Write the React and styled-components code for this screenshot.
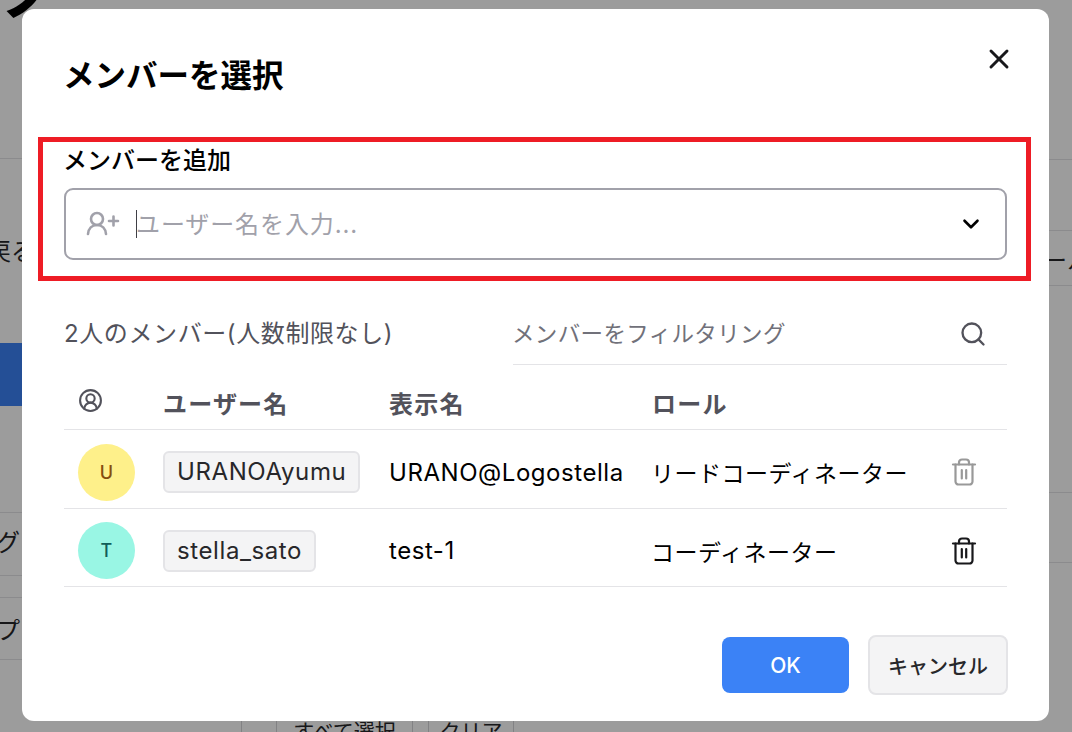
// ===== import base =====
import React from "react"
import styled, { createGlobalStyle } from "styled-components"
import { X, ChevronDown, Search, CircleUserRound } from "lucide-react"

// ===== style =====
const GlobalStyle = createGlobalStyle`
    html, body {
        margin : 0;
        padding : 0;
        height : 100%;
        overflow : hidden;
        background : #fff;
    }
    body {
        font-family : Inter, "Noto Sans CJK JP", sans-serif;
    }
`

// ----- page behind the dialog -----
const Page = styled.div`
    width : 1072px;
    height : 732px;
    overflow : hidden;
    display : flex;
    background : #fff;
    color : #27272a;
    font-size : 24px;
`
const LeftColumn = styled.div`
    width : 241px;
    flex : none;
    display : flex;
    flex-direction : column;
`
const CenterColumn = styled.div`
    flex : 1;
    display : flex;
    flex-direction : column;
    justify-content : flex-end;
`
const RightColumn = styled.div`
    width : 120px;
    flex : none;
    display : flex;
    flex-direction : column;
`
const PageRow = styled.div`
    height : ${(p) => p.$height}px;
    box-sizing : border-box;
    flex : none;
    display : flex;
    align-items : center;
    white-space : nowrap;
    overflow : hidden;
    padding-bottom : ${(p) => p.$lift || 0}px;
    border-bottom : ${(p) => p.$line ? "1px solid #e4e4e7" : "none"};
`
const ClippedLabel = styled.span`
    display : block;
    margin-left : ${(p) => p.$shift}px;
`
const HeadingMark = styled.div`
    height : 159px;
    box-sizing : border-box;
    flex : none;
    overflow : hidden;
    border-bottom : 1px solid #e4e4e7;
    font-size : 60px;
    font-weight : 700;
    line-height : 60px;
    color : #000;
    span {
        display : block;
        margin : -36px 0 0 0;
    }
`
const BlueBar = styled.div`
    height : 63px;
    flex : none;
    background : #3b82f6;
`
const BottomBar = styled.div`
    height : 16px;
    flex : none;
    display : flex;
    gap : 15px;
    border-left : 1px solid #d4d4d8;
    padding-left : 34px;
`
const PageButton = styled.div`
    width : ${(p) => p.$width}px;
    height : 40px;
    flex : none;
    box-sizing : border-box;
    border : 1px solid #d4d4d8;
    display : flex;
    justify-content : center;
    font-size : 21px;
    line-height : 30px;
`

// ----- dialog -----
const Overlay = styled.div`
    position : fixed;
    inset : 0;
    background : rgba(0, 0, 0, 0.39);
`
const Dialog = styled.div`
    position : fixed;
    left : 22px;
    top : 9px;
    width : 1027px;
    height : 712px;
    box-sizing : border-box;
    padding : 0 42px;
    background : #fff;
    border-radius : 12px;
    display : flex;
    flex-direction : column;
`
const CloseBtn = styled.button`
    position : absolute;
    top : 32px;
    right : 32px;
    width : 36px;
    height : 36px;
    padding : 0;
    border : none;
    background : none;
    color : #18181b;
    display : flex;
    align-items : center;
    justify-content : center;
`
const Title = styled.h2`
    margin : 0 0 0 -1px;
    padding-top : 46px;
    height : 128px;
    box-sizing : border-box;
    font-size : 31.5px;
    line-height : 42px;
    font-weight : 700;
    color : #000;
`
const AddSection = styled.section`
    margin : 0 -24px 0 -26px;
    padding : 9px 24px 21px 26px;
    outline : 5px solid #ee1c25;
    outline-offset : -5px;
    display : flex;
    flex-direction : column;
`
const FieldLabel = styled.label`
    font-size : 24px;
    line-height : 30px;
    font-weight : 500;
    color : #000;
    margin : 0 0 12px -1px;
`
const SelectBox = styled.div`
    height : 72px;
    box-sizing : border-box;
    border : 2px solid #a1a1aa;
    border-radius : 9px;
    display : flex;
    align-items : center;
    padding : 0 21px 0 20px;
    color : #000;
`
const Caret = styled.span`
    width : 1px;
    height : 28px;
    flex : none;
    background : #3f3f46;
    margin-left : 16px;
`
const SelectInput = styled.input`
    flex : 1;
    min-width : 0;
    border : none;
    outline : none;
    background : none;
    padding : 0;
    margin-left : -1px;
    font : inherit;
    font-size : 24px;
    letter-spacing : 0.9px;
    &::placeholder {
        color : #a1a1aa;
        opacity : 1;
    }
`
const FilterRow = styled.div`
    height : 84px;
    flex : none;
    display : flex;
    align-items : flex-end;
    justify-content : space-between;
`
const MemberCount = styled.span`
    font-size : 24px;
    line-height : 62px;
    color : #52525b;
    letter-spacing : 0.6px;
    white-space : nowrap;
`
const FilterBox = styled.div`
    width : 494px;
    height : 62px;
    box-sizing : border-box;
    border-bottom : 1px solid #e4e4e7;
    display : flex;
    align-items : center;
    padding-right : 20px;
    color : #52525b;
`
const FilterInput = styled.input`
    flex : 1;
    min-width : 0;
    border : none;
    outline : none;
    background : none;
    padding : 0;
    margin-left : -1px;
    font : inherit;
    font-size : 22.5px;
    letter-spacing : 0.35px;
    &::placeholder {
        color : #71717a;
        opacity : 1;
    }
`
const TableRow = styled.div`
    height : ${(p) => p.$height}px;
    box-sizing : border-box;
    flex : none;
    display : grid;
    grid-template-columns : 99px 226px 263px 269px 86px;
    align-items : center;
    border-bottom : 1px solid #e4e4e7;
    padding-top : ${(p) => p.$top || 0}px;
`
const HeadCell = styled.div`
    font-size : 24px;
    font-weight : 700;
    letter-spacing : 1.2px;
    color : #52525b;
    padding-top : 10px;
`
const HeadIcon = styled.div`
    padding-left : 14px;
    color : #52525b;
    display : flex;
    margin-top : 6px;
`
const AvatarCell = styled.div`
    padding-left : 14px;
`
const Avatar = styled.div`
    width : 57px;
    height : 57px;
    border-radius : 50%;
    background : ${(p) => p.$bg};
    color : ${(p) => p.$fg};
    font-size : 18px;
    font-weight : 500;
    display : flex;
    align-items : center;
    justify-content : center;
`
const NameChip = styled.span`
    display : inline-block;
    box-sizing : border-box;
    height : 42px;
    line-height : 38px;
    padding : 0 12px;
    background : #f4f4f5;
    border : 2px solid #e4e4e7;
    border-radius : 6px;
    font-size : 24px;
    letter-spacing : 0.6px;
    color : #27272a;
    white-space : nowrap;
`
const NameCell = styled.div`
    font-size : 24px;
    letter-spacing : 0.55px;
    color : #000;
    white-space : nowrap;
`
const RoleCell = styled.div`
    margin-left : -1px;
    font-size : 23px;
    letter-spacing : 0.5px;
    color : #000;
    white-space : nowrap;
`
const TrashCell = styled.div`
    display : flex;
    justify-content : center;
    color : ${(p) => p.$disabled ? "#999" : "#18181b"};
`
const Footer = styled.div`
    flex : 1;
    display : flex;
    align-items : center;
    justify-content : flex-end;
    gap : 19px;
    padding-top : 22px;
    margin-right : -1px;
`
const OkBtn = styled.button`
    width : 127px;
    height : 56px;
    border : none;
    border-radius : 8px;
    background : #3b82f6;
    color : #fff;
    font : inherit;
    font-size : 21px;
    font-weight : 500;
`
const CancelBtn = styled.button`
    width : 140px;
    height : 60px;
    box-sizing : border-box;
    border : 2px solid #e4e4e7;
    border-radius : 8px;
    background : #f4f4f5;
    color : #27272a;
    font : inherit;
    font-size : 20px;
    font-weight : 500;
`

//  ===== icons =====
const UserPlusIcon = () => (
    <svg width="34" height="28" viewBox="0 0 34 28" fill="none" stroke="#a1a1aa" strokeWidth="2.6" strokeLinecap="round" style={{ flex: "none" }}>
        <circle cx="11" cy="9" r="6" />
        <path d="M2 24c.5-5.500 4-9 9-9s8.500 3.500 9 9" />
        <path d="M27.500 6.500v9M23 11h9" />
    </svg>
)

const TrashIcon = () => (
    <svg width="26" height="28" viewBox="0 0 26 28" fill="none" stroke="currentColor" strokeWidth="2.2" strokeLinecap="round" strokeLinejoin="round">
        <path d="M2 6.500h22" />
        <path d="M8 6.500V4.500a3 3 0 0 1 3-3h4a3 3 0 0 1 3 3v2" />
        <path d="M4.500 6.500v17a3 3 0 0 0 3 3h11a3 3 0 0 0 3-3v-17" />
        <path d="M10.800 12v8.500M15.200 12v8.500" />
    </svg>
)

//  ===== data =====
const members = [
    { id: "u", initial: "U", bg: "#fef08a", fg: "#854d0e", user: "URANOAyumu", name: "URANO@Logostella", role: "リードコーディネーター", locked: true },
    { id: "t", initial: "T", bg: "#99f6e4", fg: "#115e59", user: "stella_sato", name: "test-1", role: "コーディネーター", locked: false },
]

//  ===== component =====
const App = () => {
    return (
        <React.Fragment>
            <GlobalStyle />
            <Page>
                <LeftColumn>
                    <HeadingMark><span>ノ</span></HeadingMark>
                    <PageRow $height={184} $lift={4}><ClippedLabel $shift={-13}>戻る</ClippedLabel></PageRow>
                    <BlueBar />
                    <PageRow $height={107} $line />
                    <PageRow $height={63} $line $lift={8}><ClippedLabel $shift={-28}>ング</ClippedLabel></PageRow>
                    <PageRow $height={22} $line />
                    <PageRow $height={62} $line><ClippedLabel $shift={-4}>プ</ClippedLabel></PageRow>
                </LeftColumn>
                <CenterColumn>
                    <BottomBar>
                        <PageButton $width={137}>すべて選択</PageButton>
                        <PageButton $width={86}>クリア</PageButton>
                    </BottomBar>
                </CenterColumn>
                <RightColumn>
                    <PageRow $height={160} $line />
                    <PageRow $height={71} $line />
                    <PageRow $height={55} $line><ClippedLabel $shift={91}>ール</ClippedLabel></PageRow>
                    <PageRow $height={207} $line />
                    <PageRow $height={70} $line />
                </RightColumn>
            </Page>
            <Overlay />
            <Dialog>
                <CloseBtn><X size={32} strokeWidth={2.2} /></CloseBtn>
                <Title>メンバーを選択</Title>
                <AddSection>
                    <FieldLabel>メンバーを追加</FieldLabel>
                    <SelectBox>
                        <UserPlusIcon />
                        <Caret />
                        <SelectInput readOnly placeholder="ユーザー名を入力..." />
                        <ChevronDown size={26} strokeWidth={2.4} />
                    </SelectBox>
                </AddSection>
                <FilterRow>
                    <MemberCount>2人のメンバー(人数制限なし)</MemberCount>
                    <FilterBox>
                        <FilterInput readOnly placeholder="メンバーをフィルタリング" />
                        <Search size={28} strokeWidth={2} />
                    </FilterBox>
                </FilterRow>
                <TableRow $height={65}>
                    <HeadIcon><CircleUserRound size={25} strokeWidth={2} /></HeadIcon>
                    <HeadCell>ユーザー名</HeadCell>
                    <HeadCell>表示名</HeadCell>
                    <HeadCell>ロール</HeadCell>
                    <div />
                </TableRow>
                {members.map((m) => (
                    <TableRow $height={m.locked ? 79 : 78} $top={6} key={m.id}>
                        <AvatarCell><Avatar $bg={m.bg} $fg={m.fg}>{m.initial}</Avatar></AvatarCell>
                        <div><NameChip>{m.user}</NameChip></div>
                        <NameCell>{m.name}</NameCell>
                        <RoleCell>{m.role}</RoleCell>
                        <TrashCell $disabled={m.locked}><TrashIcon /></TrashCell>
                    </TableRow>
                ))}
                <Footer>
                    <OkBtn>OK</OkBtn>
                    <CancelBtn>キャンセル</CancelBtn>
                </Footer>
            </Dialog>
        </React.Fragment>
    )
}

export default App
